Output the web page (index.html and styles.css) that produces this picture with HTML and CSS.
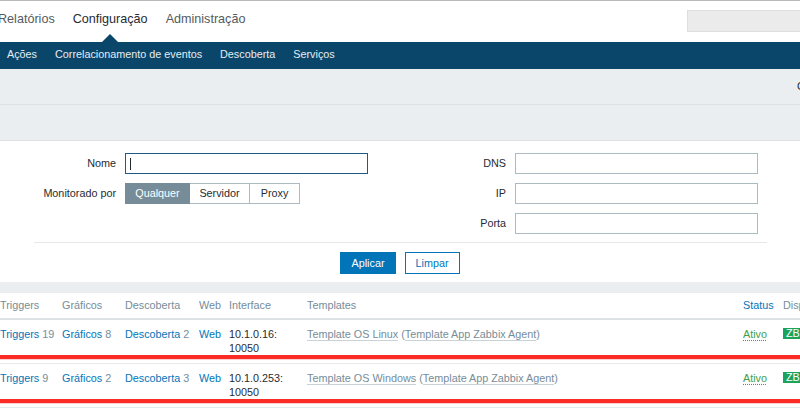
FILE: index.html
```html
<!DOCTYPE html>
<html lang="pt-BR">
<head>
<meta charset="utf-8">
<title>Hosts</title>
<link rel="stylesheet" href="styles.css">
</head>
<body>
<header class="topbar">
  <nav class="topnav">
    <a href="#" class="nav-item">Relatórios</a>
    <a href="#" class="nav-item active">Configuração</a>
    <a href="#" class="nav-item">Administração</a>
  </nav>
  <div class="search"></div>
</header>
<nav class="subnav">
  <a href="#">Ações</a>
  <a href="#">Correlacionamento de eventos</a>
  <a href="#">Descoberta</a>
  <a href="#">Serviços</a>
</nav>
<div class="page-header"><span class="hdr-cut">Grupo</span></div>
<div class="filter-tabs"></div>
<form class="filter">
  <div class="filter-grid">
    <div class="fcol">
      <label>Nome</label>
      <div class="input focused"><span class="caret"></span></div>
      <label>Monitorado por</label>
      <div class="radio">
        <span class="opt opt-any selected">Qualquer</span>
        <span class="opt opt-server">Servidor</span>
        <span class="opt opt-proxy">Proxy</span>
      </div>
    </div>
    <div class="fcol">
      <label>DNS</label>
      <div class="input"></div>
      <label>IP</label>
      <div class="input"></div>
      <label>Porta</label>
      <div class="input"></div>
    </div>
  </div>
  <div class="sep"></div>
  <div class="buttons">
    <button type="button" class="btn btn-primary">Aplicar</button>
    <button type="button" class="btn btn-alt">Limpar</button>
  </div>
</form>
<table class="hosts">
  <colgroup>
    <col class="c-trig"><col class="c-graph"><col class="c-disc"><col class="c-web"><col class="c-if"><col class="c-tpl"><col class="c-status"><col class="c-avail">
  </colgroup>
  <thead>
    <tr>
      <th>Triggers</th><th>Gráficos</th><th>Descoberta</th><th>Web</th><th>Interface</th><th>Templates</th><th class="sorted">Status</th><th>Disponibilidade</th>
    </tr>
  </thead>
  <tbody>
    <tr class="row">
      <td><a href="#" class="lnk">Triggers</a> <span class="cnt">19</span></td>
      <td><a href="#" class="lnk">Gráficos</a> <span class="cnt">8</span></td>
      <td><a href="#" class="lnk">Descoberta</a> <span class="cnt">2</span></td>
      <td><a href="#" class="lnk">Web</a></td>
      <td class="iface">10.1.0.16: 10050</td>
      <td><a href="#" class="tpl">Template OS Linux</a> <span class="paren">(<a href="#" class="tpl">Template App Zabbix Agent</a>)</span></td>
      <td><a href="#" class="ativo">Ativo</a></td>
      <td><span class="badge">ZBX</span></td>
    </tr>
    <tr class="spacer"><td colspan="8"></td></tr>
    <tr class="row">
      <td><a href="#" class="lnk">Triggers</a> <span class="cnt">9</span></td>
      <td><a href="#" class="lnk">Gráficos</a> <span class="cnt">2</span></td>
      <td><a href="#" class="lnk">Descoberta</a> <span class="cnt">3</span></td>
      <td><a href="#" class="lnk">Web</a></td>
      <td class="iface">10.1.0.253: 10050</td>
      <td><a href="#" class="tpl">Template OS Windows</a> <span class="paren">(<a href="#" class="tpl">Template App Zabbix Agent</a>)</span></td>
      <td><a href="#" class="ativo">Ativo</a></td>
      <td><span class="badge">ZBX</span></td>
    </tr>
    <tr class="spacer"><td colspan="8"></td></tr>
  </tbody>
</table>
</body>
</html>
```

FILE: styles.css
```css
html, body {
  margin: 0;
  padding: 0;
}
body {
  width: 800px;
  height: 408px;
  overflow: hidden;
  background: #ebeef0;
  font-family: "Liberation Sans", Arial, sans-serif;
  font-size: 10.8px;
  color: #1f2c33;
}
a { text-decoration: none; }

/* top bar */
.topbar {
  display: flex;
  height: 41px;
  background: #fff;
  border-top: 1px solid #b9b9b9;
}
.topnav {
  display: flex;
  margin-left: -11px;
}
.nav-item {
  position: relative;
  padding: 11px 9px 0;
  font-size: 12.6px;
  line-height: 15px;
  color: #555a5e;
}
.nav-item.active { color: #1f2c33; }
.nav-item.active::after {
  content: "";
  position: absolute;
  left: 50%;
  bottom: 0;
  margin-left: -8px;
  border-left: 8px solid transparent;
  border-right: 8px solid transparent;
  border-bottom: 8px solid #0a466a;
}
.search {
  margin: 9px -10px 0 auto;
  width: 123px;
  height: 22px;
  box-sizing: border-box;
  background: #ebebeb;
  border: 1px solid #dedede;
}

/* sub navigation */
.subnav {
  display: flex;
  height: 27px;
  background: #0a466a;
  padding-left: 0;
}
.subnav a {
  padding: 0 9px;
  line-height: 25px;
  color: #e6edf1;
}
.subnav a:first-child { margin-left: -2px; }

/* gray bands */
.page-header {
  height: 35px;
  border-bottom: 1px solid #dce1e4;
  line-height: 35px;
  padding-top: 0;
}
.hdr-cut {
  margin-left: 797px;
  white-space: nowrap;
  color: #1f2c33;
}
.filter-tabs {
  height: 35px;
  border-bottom: 1px solid #dce1e4;
}

/* filter form */
.filter {
  background: #fff;
  padding: 12px 0 8px;
  margin: 0 0 11px;
}
.filter-grid {
  display: flex;
  padding-left: 34px;
}
.fcol {
  display: grid;
  grid-template-columns: 82px 243px;
  column-gap: 9px;
  row-gap: 9px;
  align-items: center;
  align-content: start;
}
.fcol + .fcol { margin-left: 56px; }
.fcol label {
  text-align: right;
  line-height: 13px;
  white-space: nowrap;
}
.input {
  height: 21px;
  box-sizing: border-box;
  border: 1px solid #acbbc2;
  background: #fff;
  display: flex;
  align-items: center;
  padding-left: 4px;
}
.input.focused { border-color: #1d5a84; }
.caret {
  width: 1px;
  height: 12px;
  background: #1f2c33;
}
.radio {
  display: flex;
  height: 21px;
}
.opt {
  box-sizing: border-box;
  height: 21px;
  line-height: 19px;
  text-align: center;
  border: 1px solid #acbbc2;
  background: #fff;
  color: #1f2c33;
}
.opt + .opt { border-left: 0; }
.opt-any { width: 65px; }
.opt-server { width: 60px; }
.opt-proxy { width: 50px; }
.opt.selected {
  background: #768d99;
  border-color: #768d99;
  color: #fff;
}
.sep {
  margin: 8px 33px 0 34px;
  border-top: 1px solid #e4e8eb;
}
.buttons {
  display: flex;
  justify-content: center;
  gap: 9px;
  margin-top: 9px;
}
.btn {
  height: 22px;
  padding: 0 10px;
  font-family: inherit;
  font-size: 10.8px;
  line-height: 20px;
  border: 1px solid #0275b8;
  border-radius: 0;
  cursor: pointer;
}
.btn-primary { background: #0275b8; color: #fff; }
.btn-alt { background: #fff; color: #0275b8; }

/* hosts table */
.hosts {
  width: 830px;
  table-layout: fixed;
  border-collapse: separate;
  border-spacing: 0;
  background: #fff;
}
.c-trig { width: 62px; }
.c-graph { width: 63px; }
.c-disc { width: 74px; }
.c-web { width: 30px; }
.c-if { width: 78px; }
.c-tpl { width: 436px; }
.c-status { width: 40px; }
.c-avail { width: 47px; }
.hosts th {
  padding: 4px 0 5px;
  line-height: 16px;
  text-align: left;
  font-weight: normal;
  color: #768d99;
  white-space: nowrap;
  overflow: hidden;
  border-bottom: 2px solid #dde2e5;
}
.hosts th.sorted { color: #0275b8; }
.row td {
  padding: 7px 0 0;
  line-height: 14px;
  vertical-align: top;
  border-bottom: 4px solid #fb2b26;
  white-space: nowrap;
  overflow: hidden;
}
.row td.iface { white-space: normal; padding-right: 4px; }
.spacer td {
  padding: 0;
  height: 3px;
  font-size: 0;
  line-height: 0;
  border-top: 1px solid #fbd1cf;
  border-bottom: 1px solid #e6eaed;
}
.lnk { color: #0275b8; }
.cnt { color: #768d99; }
.tpl {
  color: #768d99;
  border-bottom: 1px solid #c9d2d7;
}
.paren { color: #768d99; }
.ativo {
  color: #429e47;
  text-decoration: underline dotted;
  text-underline-offset: 2px;
}
.badge {
  display: inline-block;
  vertical-align: top;
  margin-top: 1px;
  padding: 0 3px;
  line-height: 11px;
  background: #1ba35c;
  color: #fff;
}
```
